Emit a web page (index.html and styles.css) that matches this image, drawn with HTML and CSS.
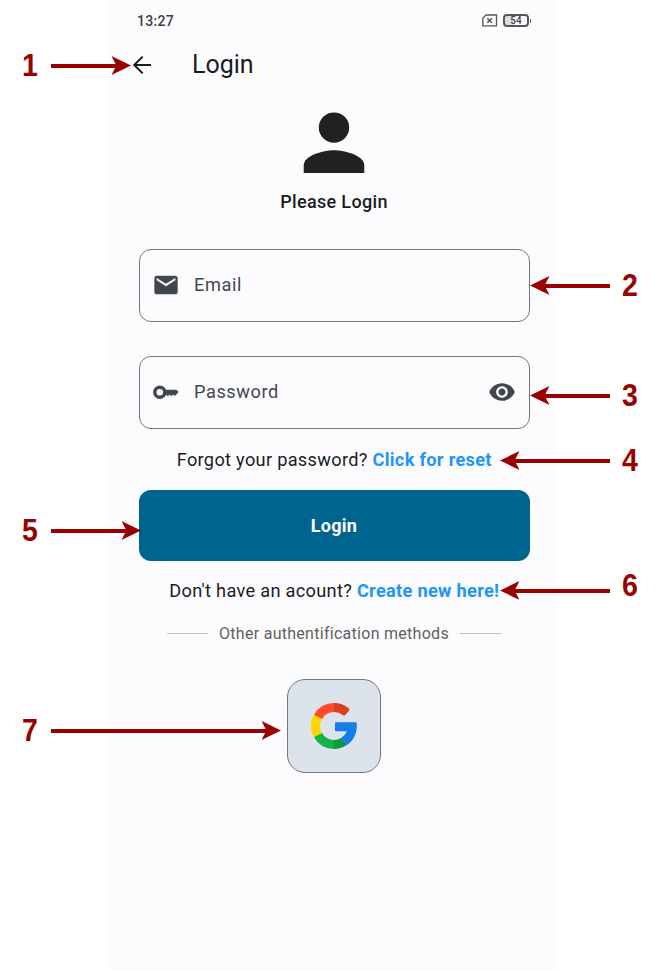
FILE: index.html
```html
<!DOCTYPE html>
<html lang="en">
<head>
<meta charset="utf-8">
<title>Login</title>
<link rel="stylesheet" href="styles.css">
</head>
<body>
<main class="phone">
  <div class="status">
    <span class="clock">13:27</span>
    <div class="status-icons">
      <svg width="16" height="13" viewBox="0 0 16 13" fill="none" stroke="#555658" stroke-width="1.3"><path d="M4 1h10.500v10.800H.8V4.200z"/><path d="M5.300 4.200l4.600 4.600M9.900 4.200L5.300 8.800" stroke-width="1.500"/></svg>
      <div class="battery"><span>54</span></div>
    </div>
  </div>
  <header class="appbar">
    <svg class="back" width="20" height="20" viewBox="0 0 20 20" fill="none" stroke="#191c1e" stroke-width="2"><path d="M19 10H2.400M10.700 1.600L2.200 10l8.500 8.400"/></svg>
    <h1>Login</h1>
  </header>
  <section class="hero">
    <svg width="62" height="62" viewBox="0 0 62 62" fill="#212121"><circle cx="31" cy="15.600" r="15.200"/><path d="M.7 61V53.500C.7 43.500 20.500 38.300 31 38.300S61.300 43.500 61.300 53.500V61z"/></svg>
    <h2>Please Login</h2>
  </section>
  <form class="form">
    <div class="field">
      <svg class="lead" width="28" height="28" viewBox="0 0 24 24" fill="#41484d"><path d="M20 4H4c-1.100 0-1.990.9-1.990 2L2 18c0 1.100.9 2 2 2h16c1.100 0 2-.9 2-2V6c0-1.100-.9-2-2-2zm0 4l-8 5-8-5V6l8 5 8-5v2z"/></svg>
      <span class="label">Email</span>
    </div>
    <div class="field password">
      <svg class="lead" width="28" height="28" viewBox="0 0 28 28" fill="none"><circle cx="7.800" cy="14.200" r="5" stroke="#41484d" stroke-width="3.500"/><path d="M13 11.700h11.400l2.200 2.300-3.600 3.900-2-1.500-1.800 1.800-1.600-1.700-1.700 1.700-1.600-1.500H13z" fill="#41484d"/></svg>
      <span class="label">Password</span>
      <svg class="eye" width="28" height="28" viewBox="0 0 24 24" fill="#41484d"><path d="M12 4.500C7 4.500 2.730 7.610 1 12c1.730 4.390 6 7.500 11 7.500s9.270-3.110 11-7.500c-1.730-4.390-6-7.500-11-7.500zM12 17c-2.760 0-5-2.240-5-5s2.240-5 5-5 5 2.240 5 5-2.240 5-5 5zm0-8c-1.660 0-3 1.340-3 3s1.340 3 3 3 3-1.340 3-3-1.340-3-3-3z"/></svg>
    </div>
    <p class="prompt reset">Forgot your password? <a>Click for reset</a></p>
    <button type="button" class="submit">Login</button>
    <p class="prompt create">Don't have an acount? <a>Create new here!</a></p>
  </form>
  <div class="divider"><i></i><span>Other authentification methods</span><i></i></div>
  <div class="google">
    <svg width="46" height="46" viewBox="-23 -23 46 46">
      <path fill="#ff4b26" d="M-20-11.300A23 23 0 0 1 0-23L1-18 0-13.900A13.900 13.900 0 0 0-12-7l-5-1z"/>
      <path fill="#d93f21" d="M0-23A23 23 0 0 1 14.800-17.700Q16-16.500 15.100-15.400L11.200-11Q10.200-10 9-10.800A14 14 0 0 0 0-13.900z"/>
      <path fill="#ffd500" d="M-20-11.300A23 23 0 0 0-20 11.300l6-1 2-3.300A14 14 0 0 1-12-7z"/>
      <path fill="#12b347" d="M-20 11.300A23 23 0 0 0 0 23l1-5-1-4.100A13.900 13.900 0 0 1-12 7z"/>
      <path fill="#0f993e" d="M0 23A23 23 0 0 0 12 19.600l-1-5-4-2.600A13.900 13.900 0 0 1 0 13.900z"/>
      <path fill="#167ee6" d="M12 19.600A23 23 0 0 0 22.700-3Q22.600-3.700 21.800-3.700H2Q1-3.700 1-2.700V4.300Q1 5.300 2 5.300H12.900A14 14 0 0 1 7 12z"/>
    </svg>
  </div>
</main>

<div class="callout c1"><b>1</b><i></i></div>
<div class="callout from-right c2"><b>2</b><i></i></div>
<div class="callout from-right c3"><b>3</b><i></i></div>
<div class="callout from-right c4"><b>4</b><i></i></div>
<div class="callout c5"><b>5</b><i></i></div>
<div class="callout from-right c6"><b>6</b><i></i></div>
<div class="callout c7"><b>7</b><i></i></div>
</body>
</html>
```
FILE: styles.css
```css
* { box-sizing: border-box; }
body {
  margin: 0;
  height: 971px;
  position: relative;
  overflow: hidden;
  background: #fff;
  font-family: Roboto, sans-serif;
  color: #191c1e;
}
h1, h2, p { margin: 0; font-weight: 400; }
svg { display: block; flex: none; }
.phone {
  width: 448px;
  height: 970px;
  margin-left: 110px;
  padding: 0 28px;
  background: #fcfcff;
}
.status {
  height: 41px;
  display: flex;
  align-items: center;
  justify-content: space-between;
}
.clock { font-size: 14px; font-weight: 500; letter-spacing: .3px; color: #3c3d3f; margin-left: -1px; }
.status-icons { display: flex; align-items: center; gap: 5px; margin-right: 1px; }
.battery {
  width: 26px;
  height: 13px;
  border: 2px solid #555658;
  border-radius: 4px;
  position: relative;
  background: linear-gradient(90deg, #dedee0 40%, #fcfcff 40%);
  font-size: 10px;
  line-height: 10px;
  text-align: center;
  font-weight: 500;
  color: #444;
}
.battery::after {
  content: "";
  position: absolute;
  right: -4px;
  top: 2.5px;
  width: 1.5px;
  height: 4px;
  background: #555658;
}
.appbar { height: 48px; display: flex; align-items: center; }
.back { margin-left: -6px; }
.appbar h1 { font-size: 25px; letter-spacing: 0; margin: 0 0 2px 40px; }
.hero { padding-top: 23px; display: flex; flex-direction: column; align-items: center; }
.hero h2 { font-size: 18px; font-weight: 500; line-height: 22px; margin-top: 17px; letter-spacing: .35px; }
.form { margin: 36px 0 0 .5px; }
.field {
  height: 73px;
  width: 391px;
  border: 1px solid #72787e;
  border-radius: 12px;
  display: flex;
  align-items: center;
  padding: 0 13px 1px 12.5px;
}
.field.password { margin-top: 34px; }
.label { font-size: 18.200px; letter-spacing: .57px; color: #41484d; margin: 0 0 1px 14px; }
.eye { margin-left: auto; }
.prompt {
  font-size: 18.200px;
  line-height: 24px;
  letter-spacing: .3px;
  text-align: center;
  white-space: nowrap;
}
.prompt a { color: #2196f3; font-weight: 700; }
.reset { margin-top: 19px; }
.submit {
  display: block;
  width: 391px;
  height: 71.500px;
  margin-top: 17.500px;
  border: 0;
  border-radius: 12px;
  background: #00658e;
  color: #fff;
  font: 700 18px Roboto, sans-serif;
  letter-spacing: .3px;
}
.create { margin-top: 18px; }
.divider {
  margin-top: 20px;
  height: 20px;
  display: flex;
  align-items: center;
  justify-content: center;
  gap: 11px;
  font-size: 16px;
  letter-spacing: .28px;
  color: #616161;
  white-space: nowrap;
}
.divider i { width: 41px; height: 1px; background: #bdbdbd; }
.google {
  width: 94px;
  height: 94px;
  margin: 36px auto 0;
  border: 1px solid #72787e;
  border-radius: 18px;
  background: #dde3ea;
  display: grid;
  place-items: center;
}
.callout {
  position: absolute;
  left: 20px;
  height: 21px;
  display: flex;
  align-items: center;
  color: #900;
}
.callout b {
  width: 20px;
  text-align: center;
  font: 700 31px/36px "Liberation Sans", Arial, sans-serif;
  transform: scaleX(.92);
}
.callout i {
  flex: 1;
  height: 21px;
  margin-left: 10.500px;
  background: linear-gradient(#990000, #990000) no-repeat 0 8.500px / calc(100% - 12px) 4px;
  position: relative;
}
.callout i::after {
  content: "";
  position: absolute;
  right: 0;
  top: 1px;
  width: 19.500px;
  height: 19px;
  background: #900;
  clip-path: polygon(0 0, 100% 50%, 0 100%, 25% 50%);
}
.from-right { left: auto; right: 20px; flex-direction: row-reverse; }
.from-right i { margin: 0 10px 0 0; background-position: 100% 8.500px; }
.from-right i::after { right: auto; left: 0; transform: scaleX(-1); }
.c1 { top: 55px; width: 111px; }
.c2 { top: 275px; width: 110px; }
.c3 { top: 385px; width: 110px; }
.c4 { top: 450px; width: 140px; }
.c5 { top: 520px; width: 121px; }
.c6 { top: 580px; width: 140px; }
.c6 b { margin-top: -10px; }
.c7 { top: 720px; width: 261px; }
```
